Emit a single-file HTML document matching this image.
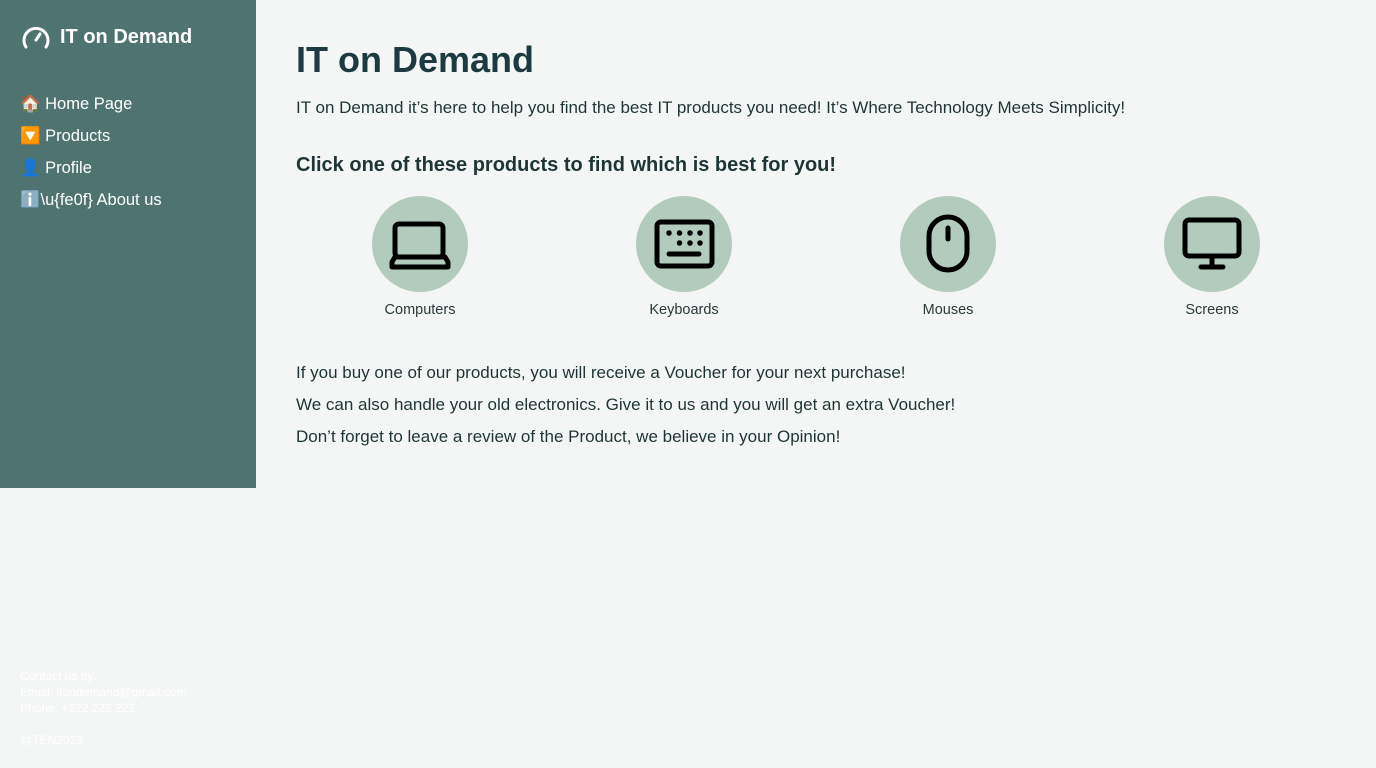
<!DOCTYPE html>
<html><head><meta charset="utf-8"><style>
*{margin:0;padding:0;box-sizing:border-box}
body{width:1376px;height:768px;background:#f4f6f5;font-family:"Liberation Sans",sans-serif;color:#1e3535;position:relative;overflow:hidden}
.side{position:absolute;left:0;top:0;width:256px;height:488px;background:#4f7370;color:#fff}
.logo{position:absolute;left:20px;top:24px;font-size:20px;font-weight:bold;display:flex;align-items:center;gap:8px}
.nav{position:absolute;left:20px;top:92px;font-size:16.5px}
.nav div{height:32px;line-height:24px}
.foot{position:absolute;left:20px;top:668px;font-size:12px;color:#fff;line-height:16px}
.abs{position:absolute;white-space:nowrap}
.c{position:absolute;top:196px;width:96px;height:96px;border-radius:50%;background:#b2cbbc}
.c svg{position:absolute;left:0;top:0}
.lab{position:absolute;top:302px;width:200px;text-align:center;font-size:14.5px;color:#2a3a3a}
</style></head><body>
<div class="side">
<div class="logo"><svg width="32" height="26" viewBox="0 0 32 26" fill="none" stroke="#fff" stroke-width="3" stroke-linecap="round"><path d="M6 23A12 12 0 1 1 26 23"/><path d="M16 16L20 10"/></svg>IT on Demand</div>
<div class="nav"><div>🏠 Home Page</div><div>🔽 Products</div><div>👤 Profile</div><div>ℹ️\u{fe0f} About us</div></div>
</div>
<div class="foot">Contact us by:<br>Email: itondemand@gmail.com<br>Phone: +222 222 222<br><br>@TEN2023</div>
<div class="abs" style="left:296px;top:39px;font-size:36px;font-weight:bold;color:#1c3a3f">IT on Demand</div>
<div class="abs" style="left:296px;top:98px;font-size:17px">IT on Demand it’s here to help you find the best IT products you need! It’s Where Technology Meets Simplicity!</div>
<div class="abs" style="left:296px;top:154px;font-size:20px;font-weight:bold">Click one of these products to find which is best for you!</div>
<div class="c" style="left:372px"><svg width="96" height="96" viewBox="0 0 96 96" fill="none" stroke="#000" stroke-width="5" stroke-linejoin="round"><rect x="23" y="28" width="48" height="33" rx="4"/><path d="M23 61L20 66V71H76V66L73 61Z"/></svg></div>
<div class="c" style="left:636px"><svg width="96" height="96" viewBox="0 0 96 96" fill="none" stroke="#000" stroke-width="5" stroke-linecap="round"><rect x="21" y="26" width="55" height="44" rx="4"/><path d="M33 58H63"/><g stroke-width="5.5"><path d="M33 37h0M43.5 37h0M54 37h0M64 37h0M43.5 47h0M54 47h0M64 47h0"/></g></svg></div>
<div class="c" style="left:900px"><svg width="96" height="96" viewBox="0 0 96 96" fill="none" stroke="#000" stroke-width="5" stroke-linecap="round"><rect x="29" y="21" width="38" height="53" rx="19"/><path d="M48 32V43"/></svg></div>
<div class="c" style="left:1164px"><svg width="96" height="96" viewBox="0 0 96 96" fill="none" stroke="#000" stroke-width="5" stroke-linecap="round"><rect x="21" y="24" width="54" height="36" rx="4"/><path d="M48 60V71M37 71H59"/></svg></div>
<div class="lab" style="left:320px">Computers</div>
<div class="lab" style="left:584px">Keyboards</div>
<div class="lab" style="left:848px">Mouses</div>
<div class="lab" style="left:1112px">Screens</div>
<div class="abs" style="left:296px;top:357px;font-size:17px;line-height:32px">If you buy one of our products, you will receive a Voucher for your next purchase!<br>We can also handle your old electronics. Give it to us and you will get an extra Voucher!<br>Don’t forget to leave a review of the Product, we believe in your Opinion!</div>
</body></html>
